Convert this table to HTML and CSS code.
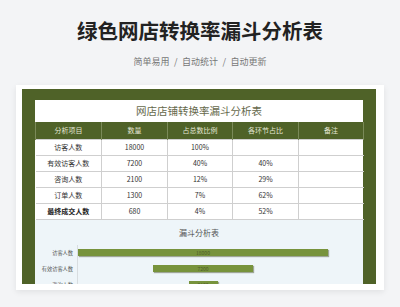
FILE: index.html
```html
<!DOCTYPE html>
<html lang="zh">
<head>
<meta charset="utf-8">
<link rel="stylesheet" href="styles.css">
</head>
<body>
<header class="hero">
  <h1 class="hero-title">绿色网店转换率漏斗分析表</h1>
  <p class="hero-sub"><span>简单易用</span><span class="sep">/</span><span>自动统计</span><span class="sep">/</span><span>自动更新</span></p>
</header>
<main class="card">
  <div class="frame">
    <div class="sheet">
      <div class="sheet-title">网店店铺转换率漏斗分析表</div>
      <table class="grid">
        <colgroup><col class="c1"><col class="c2"><col class="c3"><col class="c4"><col class="c5"></colgroup>
        <thead>
          <tr><th>分析项目</th><th>数量</th><th>占总数比例</th><th>各环节占比</th><th>备注</th></tr>
        </thead>
        <tbody>
          <tr><td>访客人数</td><td>18000</td><td>100%</td><td></td><td></td></tr>
          <tr><td>有效访客人数</td><td>7200</td><td>40%</td><td>40%</td><td></td></tr>
          <tr><td>咨询人数</td><td>2100</td><td>12%</td><td>29%</td><td></td></tr>
          <tr><td>订单人数</td><td>1300</td><td>7%</td><td>62%</td><td></td></tr>
          <tr class="final"><td>最终成交人数</td><td>680</td><td>4%</td><td>52%</td><td></td></tr>
        </tbody>
      </table>
      <section class="chart">
        <div class="chart-title">漏斗分析表</div>
        <div class="funnel">
          <div class="f-row"><span class="f-label">访客人数</span><div class="f-plot"><div class="bar" style="width:250px">18000</div></div></div>
          <div class="f-row"><span class="f-label">有效访客人数</span><div class="f-plot"><div class="bar" style="width:100px">7200</div></div></div>
          <div class="f-row"><span class="f-label">咨询人数</span><div class="f-plot"><div class="bar" style="width:29px">2100</div></div></div>
        </div>
      </section>
    </div>
  </div>
</main>
</body>
</html>
```
FILE: styles.css
```css
* { box-sizing: border-box; }
html, body { margin: 0; padding: 0; }
body {
  width: 400px;
  height: 307px;
  overflow: hidden;
  background: #f3f4f6;
  font-family: "Noto Sans CJK SC", "Noto Sans", sans-serif;
}
.hero { padding-top: 20px; text-align: center; }
.hero-title {
  margin: 0;
  font-size: 20.5px;
  line-height: 21px;
  font-weight: 700;
  color: #222;
}
.hero-sub {
  margin: 14px 0 0;
  font-size: 9px;
  line-height: 14px;
  color: #777;
}
.sep { margin: 0 4.5px; }
.card {
  margin: 16px 16px 0;
  width: 368px;
  height: 205px;
  background: #fff;
  padding: 4px 8px 6px 6px;
  box-shadow: 0 2px 6px rgba(0,0,0,0.08);
}
.frame {
  height: 195px;
  background: #4f6228;
  padding: 11px 13px 0 13px;
  overflow: hidden;
}
.sheet { background: #fff; width: 328px; }
.sheet-title {
  height: 22px;
  line-height: 22px;
  text-align: center;
  font-size: 10.5px;
  color: #66694c;
}
.grid {
  width: 328px;
  table-layout: fixed;
  border-collapse: collapse;
}
.c1, .c2, .c4 { width: 66px; }
.c3, .c5 { width: 65px; }
.grid th {
  height: 17px;
  padding: 0;
  background: #4f6228;
  color: #e4e6d4;
  font-size: 7px;
  font-weight: 400;
  border-left: 1px solid #7b8a59;
  border-right: 1px solid #7b8a59;
}
.grid td {
  height: 16px;
  padding: 0;
  text-align: center;
  font-size: 7px;
  color: #333;
  border: 1px solid #cfcfcf;
}
.grid td:first-child { border-left: none; }
.grid td:last-child { border-right: none; }
.final td:first-child { font-weight: 700; color: #222; }
.chart {
  background: #eef5f9;
  height: 80px;
  padding-top: 7px;
}
.chart-title {
  text-align: center;
  font-size: 8px;
  line-height: 12px;
  color: #555;
}
.funnel { margin-top: 6px; }
.f-row {
  display: flex;
  align-items: center;
  height: 16px;
}
.f-label {
  width: 42px;
  padding-right: 4px;
  text-align: right;
  font-size: 5.2px;
  color: #555;
  white-space: nowrap;
}
.f-plot {
  width: 251px;
  height: 16px;
  border-left: 1px solid #d8dde0;
  display: flex;
  align-items: center;
  justify-content: center;
}
.bar {
  height: 7px;
  background: #77933c;
  box-shadow: 1px 1px 1px rgba(60,70,30,0.45);
  font-size: 5px;
  line-height: 7px;
  text-align: center;
  color: #4e5e28;
  overflow: hidden;
}
```
